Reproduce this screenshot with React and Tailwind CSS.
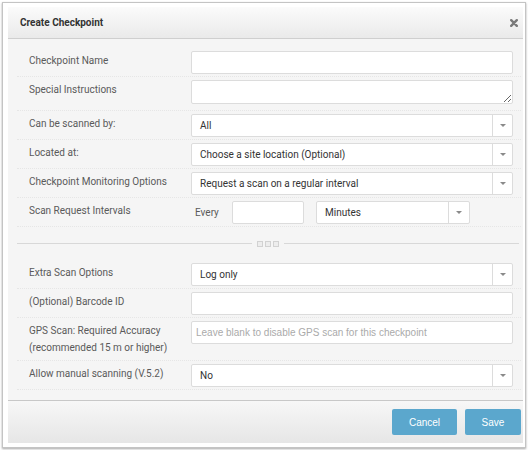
import React from 'react';

const font = "font-['Roboto',sans-serif]";

function Caret() {
  return <span className="h-0 w-0 border-x-[3px] border-t-[3px] border-x-transparent border-t-[#8a8a8a]"></span>;
}

function Select({ value, className = 'flex-1', arrow = 'w-[20px]' }) {
  return (
    <div className={`flex h-[23px] items-center rounded-[2px] border border-[#dcdcdc] bg-white ${className}`}>
      <span className={`flex-1 pl-[8px] text-[10px] text-[#333] ${font}`}>{value}</span>
      <span className={`flex h-full items-center justify-center border-l border-[#dcdcdc] ${arrow}`}>
        <Caret />
      </span>
    </div>
  );
}

function Field({ placeholder = '' }) {
  return (
    <input
      readOnly
      placeholder={placeholder}
      className="block h-[23px] w-full rounded-[2px] border border-[#dcdcdc] bg-white px-[4px] font-['Liberation_Sans',sans-serif] text-[10px] outline-none placeholder:text-[#aaa]"
    />
  );
}

function Row({ label, children, extra = 'pb-[2px]' }) {
  return (
    <div className={`flex items-start border-b border-dotted border-[#e6e6e6] pl-[12px] pr-[8px] pt-[3px] ${extra}`}>
      <div className={`w-[162px] shrink-0 pt-[1px] text-[10px] leading-[17px] text-[#5a5a5a] ${font}`}>{label}</div>
      <div className="flex flex-1">{children}</div>
    </div>
  );
}

export default function App() {
  return (
    <div className="h-[450px] w-[530px] bg-white pl-[2px] pt-[2px]">
      <div className="h-[446px] w-[524px] border border-[#c4c4c4] bg-white pb-[4px] pl-[5px] pr-[2px] pt-[4px] shadow-[0_1px_2px_rgba(0,0,0,0.35)]">
        <div className="flex h-full flex-col">
          {/* header */}
          <div className="flex h-[32px] shrink-0 items-center justify-between border-b border-[#cfcfcf] bg-linear-to-b from-[#fbfbfb] to-[#eaeaea] pl-[12px] pr-[4px]">
            <span className={`text-[10px] font-bold text-[#333] ${font}`}>Create Checkpoint</span>
            <svg width="8" height="8" viewBox="0 0 8 8" className="mr-[1px]">
              <path d="M1.2 1.2 L6.8 6.8 M6.8 1.2 L1.2 6.8" stroke="#7a7a7a" strokeWidth="2.4" strokeLinecap="round" />
            </svg>
          </div>

          {/* body */}
          <div className="flex-1 bg-[#f5f5f5] pb-[8px] pl-[9px] pr-[2px] pt-[9px]">
            <Row label="Checkpoint Name">
              <Field />
            </Row>
            <Row label="Special Instructions" extra="pb-[6px]">
              <textarea readOnly className="block h-[24px] w-full resize-y rounded-[2px] border border-[#dcdcdc] bg-white outline-none"></textarea>
            </Row>
            <Row label="Can be scanned by:">
              <Select value="All" />
            </Row>
            <Row label="Located at:">
              <Select value="Choose a site location (Optional)" />
            </Row>
            <Row label="Checkpoint Monitoring Options">
              <Select value="Request a scan on a regular interval" />
            </Row>
            <Row label="Scan Request Intervals">
              <div className="flex items-center">
                <span className={`ml-[4px] w-[37px] text-[10px] text-[#5a5a5a] ${font}`}>Every</span>
                <input readOnly className="block h-[23px] w-[72px] rounded-[2px] border border-[#dcdcdc] bg-white outline-none" />
                <Select value="Minutes" className="ml-[12px] w-[154px]" arrow="w-[21px]" />
              </div>
            </Row>

            {/* divider */}
            <div className="flex h-[33px] items-center pr-[2px]">
              <div className="h-px flex-1 bg-[#d8d8d8]"></div>
              <div className="mx-[5px] flex gap-[2px]">
                <span className="h-[6px] w-[6px] border border-[#d2d2d2] bg-[#ededed]"></span>
                <span className="h-[6px] w-[6px] border border-[#d2d2d2] bg-[#ededed]"></span>
                <span className="h-[6px] w-[6px] border border-[#d2d2d2] bg-[#ededed]"></span>
              </div>
              <div className="h-px flex-1 bg-[#d8d8d8]"></div>
            </div>

            <Row label="Extra Scan Options">
              <Select value="Log only" />
            </Row>
            <Row label="(Optional) Barcode ID">
              <Field />
            </Row>
            <Row label={<>GPS Scan: Required Accuracy<br />(recommended 15 m or higher)</>} extra="pb-[4px]">
              <Field placeholder="Leave blank to disable GPS scan for this checkpoint" />
            </Row>
            <Row label="Allow manual scanning (V.5.2)">
              <Select value="No" />
            </Row>
          </div>

          {/* footer */}
          <div className="flex h-[43px] shrink-0 items-start justify-end gap-[8px] border-t border-[#c8c8c8] bg-linear-to-b from-[#f7f7f7] to-[#e6e6e6] pr-[2px] pt-[8px]">
            <button className="h-[26px] w-[65px] rounded-[2px] bg-[#5ba7cd] font-['Liberation_Sans',sans-serif] text-[10px] text-white">Cancel</button>
            <button className="h-[26px] w-[56px] rounded-[2px] bg-[#5ba7cd] font-['Liberation_Sans',sans-serif] text-[10px] text-white">Save</button>
          </div>
        </div>
      </div>
    </div>
  );
}
